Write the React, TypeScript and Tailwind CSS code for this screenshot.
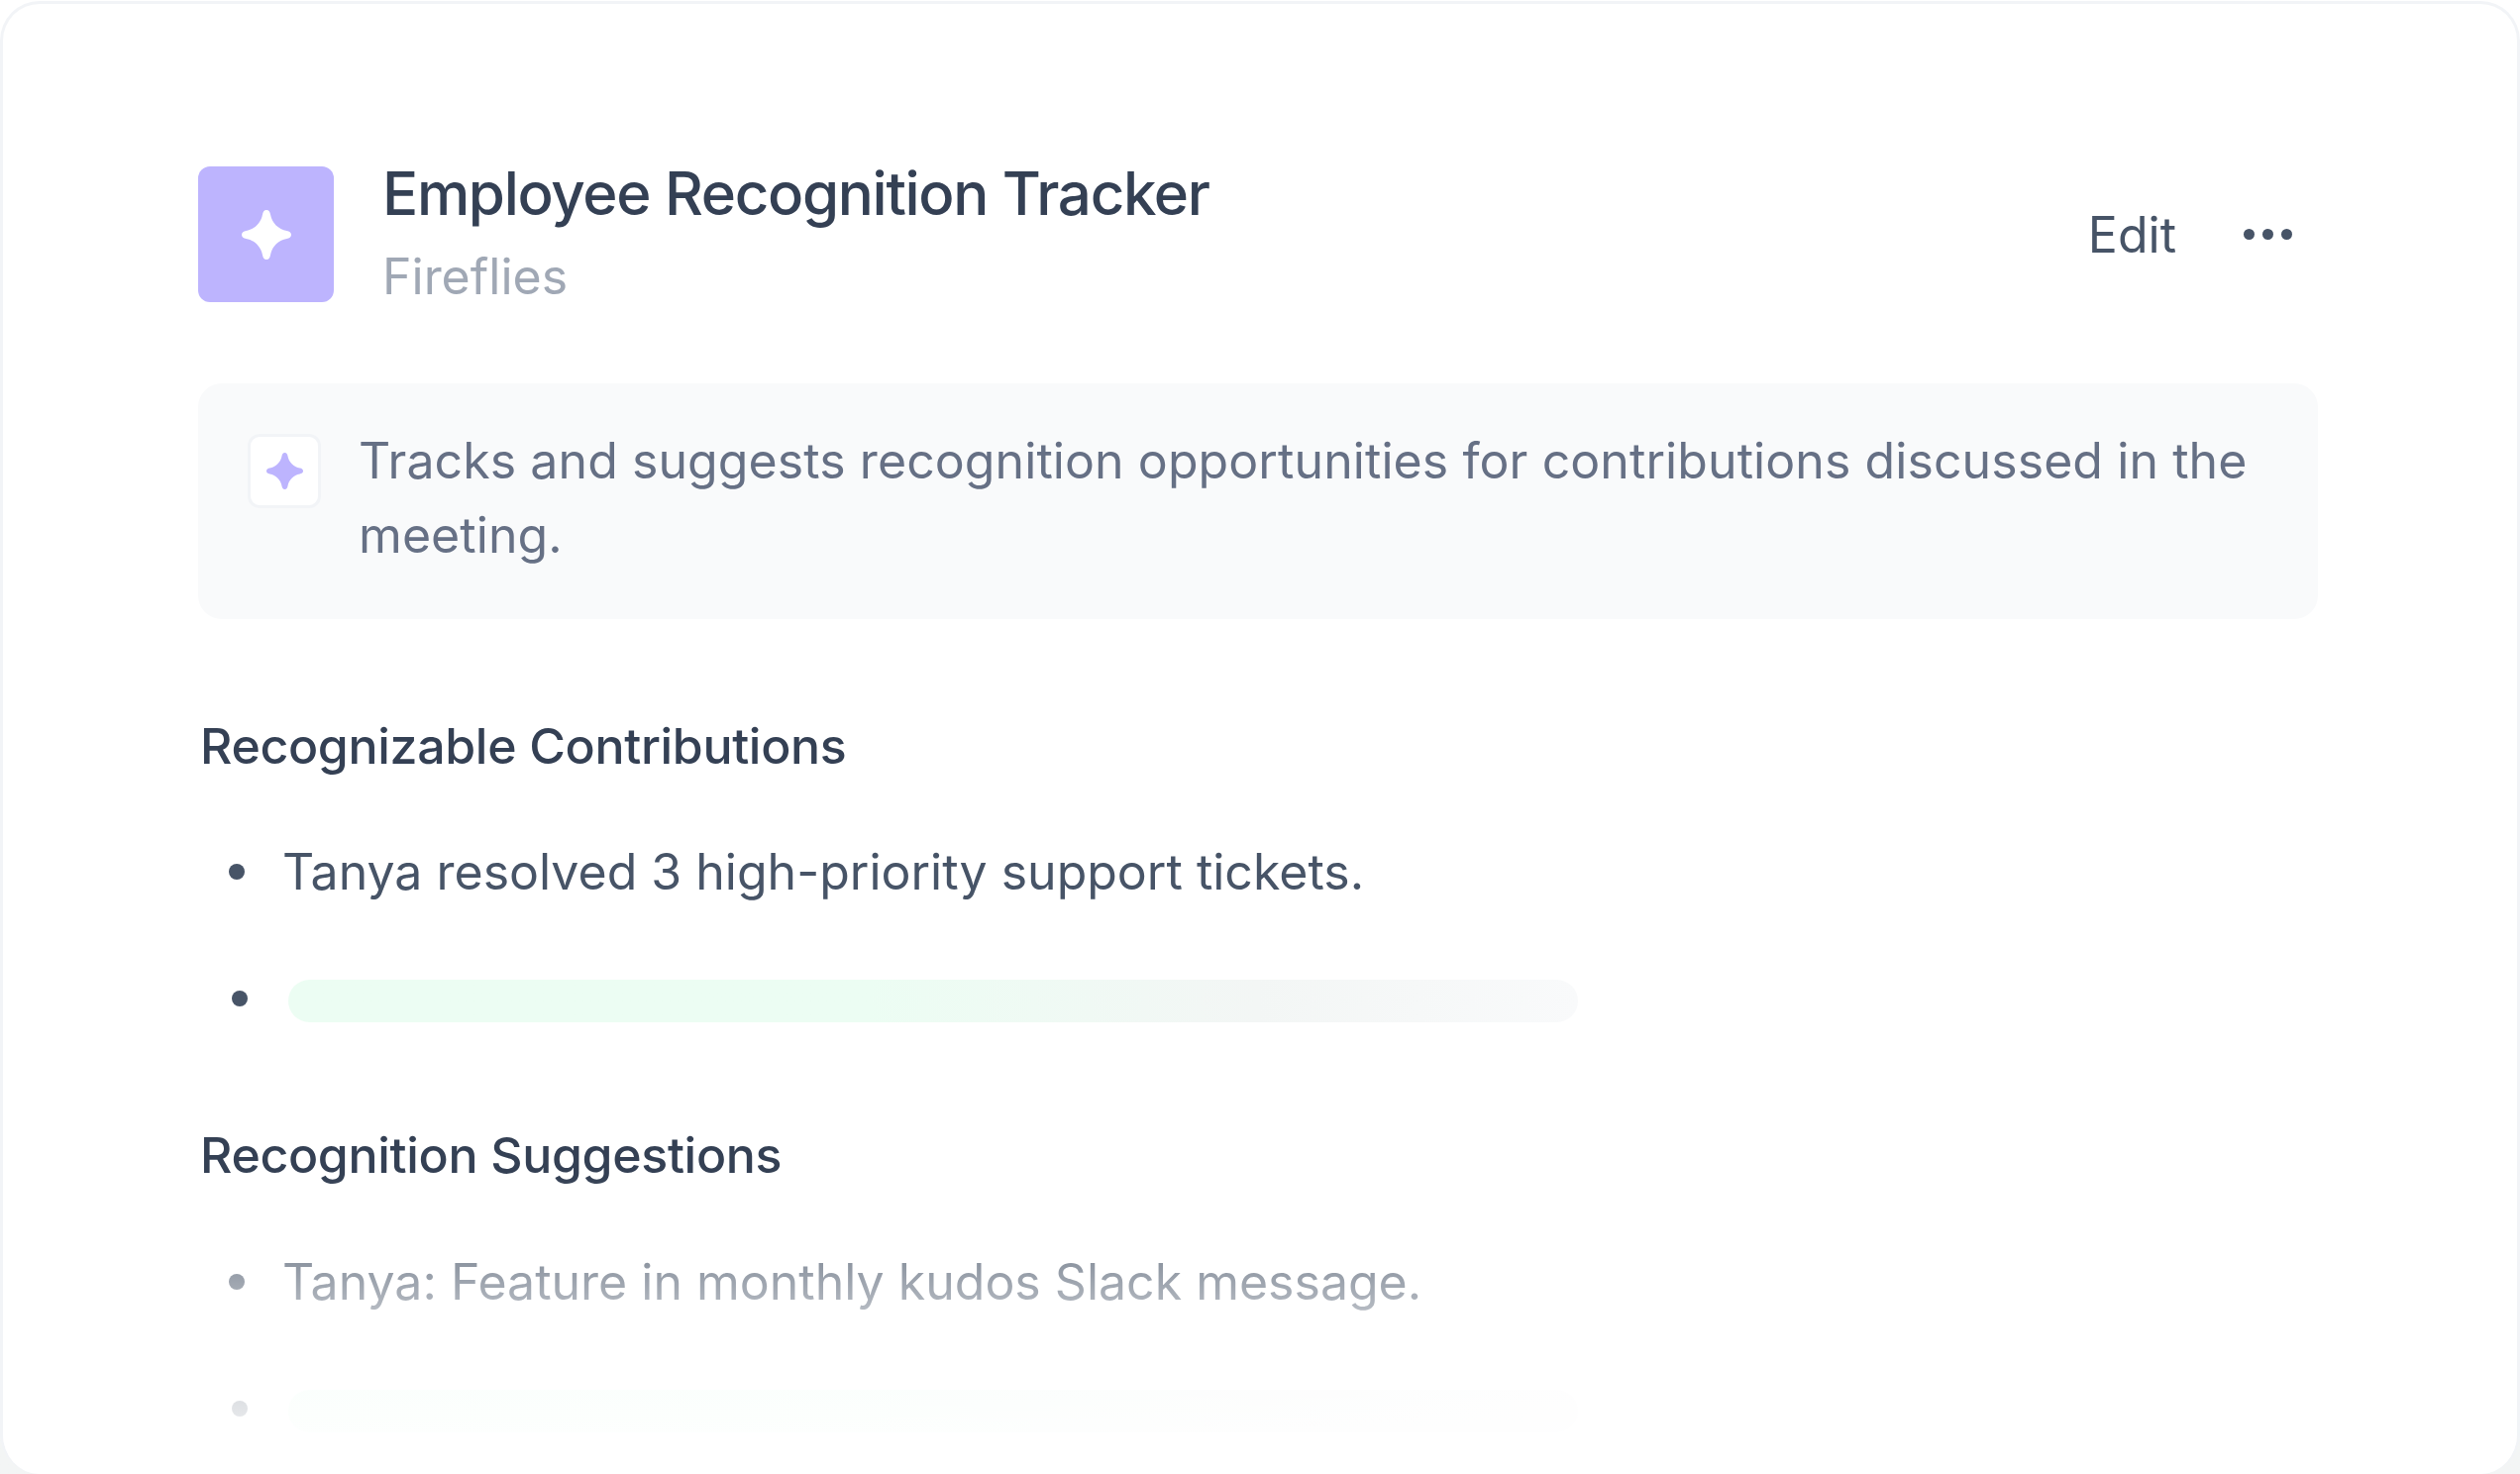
const STAR =
  'M25 0C27.5 0 28.5 2 29 4.5C30.5 13 37 19.5 45.5 21C48 21.5 50 22.5 50 25C50 27.5 48 28.5 45.5 29C37 30.5 30.5 37 29 45.5C28.5 48 27.5 50 25 50C22.5 50 21.5 48 21 45.5C19.5 37 13 30.5 4.5 29C2 28.5 0 27.5 0 25C0 22.5 2 21.5 4.5 21C13 19.5 19.5 13 21 4.5C21.5 2 22.5 0 25 0Z'

function Star({ className }: { className: string }) {
  return (
    <svg viewBox="0 0 50 50" className={className} fill="currentColor">
      <path d={STAR} />
    </svg>
  )
}

function Dot({ className }: { className: string }) {
  return <span className={`block w-4 h-4 rounded-full shrink-0 ${className}`} />
}

export default function App() {
  return (
    <div className="h-[1488px] bg-gradient-to-b from-white from-[97%] to-[#f3f5f5] to-[97%] pt-px">
      <div className="relative h-full overflow-hidden rounded-[40px] border-[3px] border-b-0 border-[#f2f4f7] bg-white pl-[197px] pr-[201px] pt-[164px] font-['Inter',sans-serif]">
        {/* header */}
        <div className="flex items-center justify-between">
          <div className="flex items-center gap-[49px]">
            <div className="flex h-[137px] w-[137px] items-center justify-center rounded-xl bg-[#bdb4fe] text-white">
              <Star className="h-[50px] w-[50px]" />
            </div>
            <div className="flex flex-col">
              <h1 className="text-[60px] font-medium leading-[54px] tracking-[-1.3px] text-[#344054]">Employee Recognition Tracker</h1>
              <p className="mt-[31px] text-[50px] leading-[52px] text-[#a0a8b5]">Fireflies</p>
            </div>
          </div>
          <div className="mr-[26px] flex items-center gap-[68px] text-[#475467]">
            <span className="text-[50px] leading-[60px]">Edit</span>
            <div className="flex items-center gap-[8px]">
              <span className="h-[11px] w-[11px] rounded-full bg-[#475467]" />
              <span className="h-[11px] w-[11px] rounded-full bg-[#475467]" />
              <span className="h-[11px] w-[11px] rounded-full bg-[#475467]" />
            </div>
          </div>
        </div>

        {/* description */}
        <div className="mt-[82px] flex items-start gap-[38px] rounded-3xl bg-[#f9fafb] pb-[47px] pl-[50px] pr-10 pt-[41px]">
          <div className="mt-[10px] flex h-[75px] w-[74px] shrink-0 items-center justify-center rounded-xl border-[3px] border-[#f2f4f7] bg-white text-[#bdb4fe]">
            <Star className="h-[37px] w-[37px]" />
          </div>
          <p className="text-[50px] leading-[75px] tracking-[0.08px] text-[#667085]">
            Tracks and suggests recognition opportunities for contributions discussed in the meeting.
          </p>
        </div>

        {/* recognizable contributions */}
        <h2 className="ml-[2px] mt-24 h-16 text-[50px] font-medium leading-[64px] tracking-[-0.32px] text-[#344054]">Recognizable Contributions</h2>
        <ul className="mt-[63px] flex flex-col gap-16 pl-[31px]">
          <li className="flex h-16 items-center gap-[38px] text-[50px] leading-[64px] text-[#475467]">
            <Dot className="bg-[#475467]" />
            Tanya resolved 3 high-priority support tickets.
          </li>
          <li className="flex h-16 items-center gap-[41px] pl-[3px]">
            <Dot className="bg-[#475467]" />
            <div className="mt-[5px] h-[43px] w-[1302px] rounded-full bg-gradient-to-r from-[#ecfdf3] from-45% via-[#f3f6f5] via-75% to-[#f9fafb]" />
          </li>
        </ul>

        {/* recognition suggestions */}
        <h2 className="ml-[2px] mt-[94px] h-16 text-[50px] font-medium leading-[64px] tracking-[-0.32px] text-[#344054]">Recognition Suggestions</h2>
        <ul className="mt-[64px] flex flex-col gap-16 pl-[31px]">
          <li className="flex h-16 items-center gap-[38px] text-[50px] leading-[64px] text-[#475467]">
            <Dot className="bg-[#475467]" />
            Tanya: Feature in monthly kudos Slack message.
          </li>
          <li className="flex h-16 items-center gap-[41px] pl-[3px]">
            <Dot className="bg-[#475467]" />
            <div className="mt-[5px] h-[43px] w-[1302px] rounded-full bg-gradient-to-r from-[#ecfdf3] from-45% via-[#f3f6f5] via-75% to-[#f9fafb]" />
          </li>
        </ul>

        {/* bottom fade */}
        <div className="absolute inset-x-0 bottom-0 h-[300px] bg-gradient-to-b from-white/0 via-white/60 via-[45%] to-white" />
      </div>
    </div>
  )
}
